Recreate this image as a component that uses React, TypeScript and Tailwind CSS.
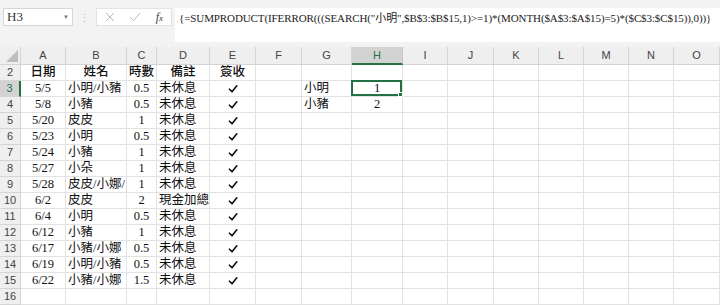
import React from 'react';

const cols = ['', 'A', 'B', 'C', 'D', 'E', 'F', 'G', 'H', 'I', 'J', 'K', 'L', 'M', 'N', 'O'];

type Align = 'c' | 'l';
const align: Align[] = ['c', 'c', 'l', 'c', 'l', 'c', 'l', 'l', 'c', 'l', 'l', 'l', 'l', 'l', 'l', 'l'];

const rows: string[][] = [
    ['日期', '姓名', '時數', '備註', '簽收'],
    ['5/5', '小明/小豬', '0.5', '未休息', '✓'],
    ['5/8', '小豬', '0.5', '未休息', '✓'],
    ['5/20', '皮皮', '1', '未休息', '✓'],
    ['5/23', '小明', '0.5', '未休息', '✓'],
    ['5/24', '小豬', '1', '未休息', '✓'],
    ['5/27', '小朵', '1', '未休息', '✓'],
    ['5/28', '皮皮/小娜/', '1', '未休息', '✓'],
    ['6/2', '皮皮', '2', '現金加總', '✓'],
    ['6/4', '小明', '0.5', '未休息', '✓'],
    ['6/12', '小豬', '1', '未休息', '✓'],
    ['6/17', '小豬/小娜', '0.5', '未休息', '✓'],
    ['6/19', '小明/小豬', '0.5', '未休息', '✓'],
    ['6/22', '小豬/小娜', '1.5', '未休息', '✓'],
    [],
];

// G / H side table
const side: Record<number, [string, string]> = {
    3: ['小明', '1'],
    4: ['小豬', '2'],
};

const cellFont = { fontFamily: '"Liberation Serif", "Noto Sans CJK TC", serif' };
const uiFont = { fontFamily: '"Liberation Sans", "Noto Sans", sans-serif' };

function Check() {
    return (
        <svg width="10" height="10" viewBox="0 0 10 10">
            <path d="M1.5 5.2 L4 7.8 L8.8 1.8" fill="none" stroke="#111" strokeWidth="1.6" strokeLinecap="round" strokeLinejoin="round" />
        </svg>
    );
}

export default function App() {
    return (
        <div className="w-[720px] h-[305px] overflow-hidden bg-white">
            {/* formula bar */}
            <div className="h-[47px] bg-[#f3f3f3] flex items-start pt-[8px] pl-[3px]">
                <div className="shrink-0 w-[70px] h-[18px] bg-white border border-[#d6d6d6] flex items-center justify-between pl-[3px] pr-[3px]">
                    <span className="text-[13px] text-[#333]" style={cellFont}>H3</span>
                    <span className="text-[6px] text-[#777]" style={uiFont}>▼</span>
                </div>
                <div className="shrink-0 w-[23px] h-[18px] flex items-center justify-center text-[#b5b5b5] text-[11px] leading-none">⋮</div>
                <div className="shrink-0 w-[76px] h-[18px] bg-white border border-[#e3e3e3] flex items-center justify-between pl-[8px] pr-[8px]">
                    <svg width="10" height="10" viewBox="0 0 10 10"><path d="M1 1 L9 9 M9 1 L1 9" stroke="#b8b8b8" strokeWidth="1" /></svg>
                    <svg width="12" height="10" viewBox="0 0 12 10"><path d="M1 5 L4.5 8.5 L11 1" fill="none" stroke="#b8b8b8" strokeWidth="1" /></svg>
                    <span className="italic text-[12px] text-[#444] leading-none" style={cellFont}>f<span className="text-[9px]">x</span></span>
                </div>
                <div className="ml-[3px] flex-1 min-w-0 h-[34px] bg-white pl-[4px] pt-[2px] text-[11px] tracking-[-0.1px] text-[#222] whitespace-nowrap overflow-hidden" style={cellFont}>
                    {'{=SUMPRODUCT(IFERROR(((SEARCH("小明",$B$3:$B$15,1)>=1)*(MONTH($A$3:$A$15)=5)*($C$3:$C$15)),0))}'}
                </div>
            </div>

            {/* grid */}
            <div className="grid grid-cols-[21px_45px_61px_30px_53px_46px_46px_50px_51px_45px_46px_45px_45px_45px_45px_46px] grid-rows-[18px_repeat(15,16px)]">
                {cols.map((c, i) => {
                    if (i === 0) {
                        return (
                            <div key="corner" className="bg-[#efefef] border-r border-b border-[#d4d4d4] flex items-end justify-end p-[2px]">
                                <svg width="12" height="12" viewBox="0 0 12 12"><path d="M12 0 L12 12 L0 12 Z" fill="#bdbdbd" /></svg>
                            </div>
                        );
                    }
                    const active = c === 'H';
                    return (
                        <div
                            key={c}
                            className={active
                                ? 'bg-[#d3d3d3] border-r border-[#c6c6c6] border-b-2 border-b-[#217346] text-[#217346] flex items-center justify-center text-[11px]'
                                : 'bg-[#efefef] border-r border-b border-[#d4d4d4] text-[#444] flex items-center justify-center text-[11px]'}
                            style={uiFont}
                        >
                            {c}
                        </div>
                    );
                })}

                {rows.map((r, ri) => {
                    const rowNum = ri + 2;
                    const activeRow = rowNum === 3;
                    const cells = [];
                    cells.push(
                        <div
                            key={'h' + rowNum}
                            className={activeRow
                                ? 'bg-[#d3d3d3] border-b border-[#d4d4d4] border-r-2 border-r-[#217346] text-[#217346] flex items-center justify-center text-[11px]'
                                : 'bg-[#efefef] border-r border-b border-[#d4d4d4] text-[#444] flex items-center justify-center text-[11px]'}
                            style={uiFont}
                        >
                            {rowNum}
                        </div>
                    );
                    for (let ci = 1; ci < cols.length; ci++) {
                        let v: string | undefined = r[ci - 1];
                        if (ci === 7 && side[rowNum]) v = side[rowNum][0];
                        if (ci === 8 && side[rowNum]) v = side[rowNum][1];
                        const selected = rowNum === 3 && ci === 8;
                        const centered = align[ci] === 'c' || rowNum === 2;
                        cells.push(
                            <div
                                key={rowNum + '-' + ci}
                                className={`relative border-r border-b border-[#e2e2e2] flex items-center text-[12.5px] text-[#111] overflow-visible whitespace-nowrap ${centered ? 'justify-center' : 'justify-start pl-[2px]'} ${rowNum === 2 ? 'font-medium' : ''}`}
                                style={cellFont}
                            >
                                {v === '✓' ? <Check /> : v}
                                {selected && (
                                    <div className="absolute -left-[1px] -top-[1px] right-0 bottom-0 border-2 border-[#217346]">
                                        <div className="absolute -right-[3px] -bottom-[3px] w-[5px] h-[5px] bg-[#217346] border border-white" />
                                    </div>
                                )}
                            </div>
                        );
                    }
                    return <React.Fragment key={'r' + rowNum}>{cells}</React.Fragment>;
                })}
            </div>
        </div>
    );
}
